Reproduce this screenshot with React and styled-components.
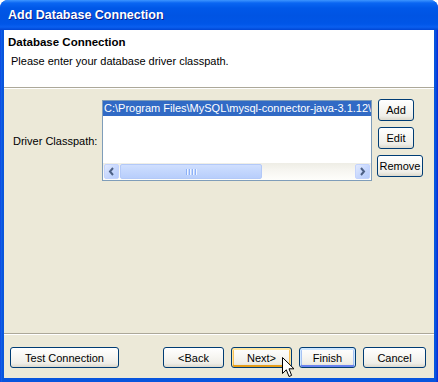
import React from "react";
import styled, { createGlobalStyle, css } from "styled-components";

const Global = createGlobalStyle`
  html, body { margin: 0; padding: 0; background: #ffffff; }
  body { font-family: "Liberation Sans", Arial, sans-serif; }
  * { box-sizing: border-box; }
`;

const Window = styled.div`
  position: relative;
  width: 438px;
  height: 382px;
  display: flex;
  flex-direction: column;
  border-radius: 8px 8px 0 0;
  overflow: hidden;
  background: linear-gradient(90deg, #0831d9 0px, #166aee 1px, #0855dd 2px, #0855dd 436px, #0831d9 437px);
  font-family: "Liberation Sans", Arial, sans-serif;
  font-size: 11px;
  color: #000;
`;

const TitleBar = styled.div`
  height: 30px;
  flex: none;
  display: flex;
  align-items: center;
  padding: 0 0 1px 8px;
  background: linear-gradient(
    180deg,
    #3d95ff 0px,
    #0a66f2 3px,
    #0058e8 8px,
    #0054e3 16px,
    #0056e8 24px,
    #0a5ff0 27px,
    #0046d4 30px
  );
  color: #fff;
  font-weight: bold;
  font-size: 12.5px;
  text-shadow: 1px 1px 0 #0a1e8a;
`;

const Frame = styled.div`
  flex: 1;
  display: flex;
  flex-direction: column;
  margin: 0 4px 4px 4px;
  background: #ece9d8;
  min-height: 0;
`;

const Header = styled.div`
  flex: none;
  height: 58px;
  background: #fff;
  padding: 6px 4px 0 4px;
  border-bottom: 1px solid #aca899;
  box-shadow: 0 1px 0 #ffffff;
  margin-bottom: 1px;
`;

const HeaderTitle = styled.div`
  font-weight: bold;
  font-size: 11.5px;
  line-height: 13px;
`;

const HeaderText = styled.div`
  margin: 6px 0 0 3px;
  line-height: 13px;
`;

const Body = styled.div`
  flex: 1;
  display: flex;
  align-items: flex-start;
  padding: 11px 0 0 9px;
`;

const Field = styled.div`
  display: flex;
  align-items: center;
`;

const Label = styled.div`
  width: 89px;
`;

const ListBox = styled.div`
  width: 270px;
  height: 81px;
  border: 1px solid #7f9db9;
  background: #fff;
  display: flex;
  flex-direction: column;
`;

const ListViewport = styled.div`
  flex: 1;
  overflow: hidden;
`;

const ListRow = styled.div`
  height: 15px;
  line-height: 14px;
  white-space: nowrap;
  overflow: hidden;
  padding-left: 1px;
  background: ${(p) => (p.$selected ? "#316ac5" : "transparent")};
  color: ${(p) => (p.$selected ? "#fff" : "#000")};
  width: 100%;
`;

const HScroll = styled.div`
  height: 17px;
  flex: none;
  display: flex;
  align-items: center;
  gap: 1px;
  padding: 0 1px;
  background: linear-gradient(180deg, #eeede5 0%, #f6f5f0 40%, #fefefb 100%);
`;

const ArrowBtn = styled.div`
  width: 15px;
  height: 15px;
  flex: none;
  border: 1px solid #c3d3fd;
  border-radius: 2px;
  background: linear-gradient(135deg, #e2eafe 0%, #c8d8fd 50%, #b6ccfb 100%);
  display: flex;
  align-items: center;
  justify-content: center;
`;

const Thumb = styled.div`
  width: 142px;
  height: 15px;
  flex: none;
  border: 1px solid #b3c9f8;
  border-radius: 2px;
  background: linear-gradient(180deg, #d0dffe 0%, #c4d7fd 45%, #b8cefb 100%);
  display: flex;
  align-items: center;
  justify-content: center;
  gap: 1px;
`;

const Grip = styled.span`
  width: 1px;
  height: 6px;
  background: #8cb0f8;
  box-shadow: 1px 0 0 #eef4fe;
  margin-right: 1px;
`;

const Track = styled.div`
  flex: 1;
`;

const SideButtons = styled.div`
  display: flex;
  flex-direction: column;
  align-items: flex-start;
  gap: 6px;
  margin: -1px 0 0 5px;
`;

const SideButton = styled.div`
  padding-left: ${(p) => (p.$indent ? 1 : 0)}px;
`;

const hot = css`
  box-shadow: inset 0 1px 0 1px #ffe7a2, inset 0 -1px 0 1px #e59d1b, inset 0 0 0 2px #f9c15a;
`;
const def = css`
  box-shadow: inset 0 1px 0 1px #cee7ff, inset 0 -1px 0 1px #6982ee, inset 0 0 0 2px #a6c2f3;
`;

const Button = styled.button`
  height: ${(p) => p.$h || 21}px;
  width: ${(p) => p.$w}px;
  padding: 0;
  font-family: "Liberation Sans", Arial, sans-serif;
  font-size: 11px;
  color: #000;
  border: 1px solid #003c74;
  border-radius: 3px;
  background: linear-gradient(180deg, #ffffff 0%, #f7f6f2 45%, #efeee8 80%, #dcd8cc 100%);
  display: flex;
  align-items: center;
  justify-content: center;
  ${(p) => (p.$variant === "hot" ? hot : p.$variant === "default" ? def : "")}
`;

const Footer = styled.div`
  flex: none;
  display: flex;
  align-items: center;
  gap: 7px;
  padding: 13px 8px 10px 6px;
  border-top: 1px solid #aca899;
  box-shadow: inset 0 1px 0 #ffffff;
`;

const Spacer = styled.div`
  flex: 1;
`;

const Cursor = styled.svg`
  position: absolute;
  left: 282px;
  top: 357px;
`;

const Chevron = ({ dir }) => (
  <svg width="7" height="9" viewBox="0 0 7 9">
    <polyline
      points={dir === "left" ? "5,1 2,4.5 5,8" : "2,1 5,4.5 2,8"}
      fill="none"
      stroke="#4d6185"
      strokeWidth="2"
    />
  </svg>
);

export default function App() {
  return (
    <>
      <Global />
      <Window>
        <TitleBar>Add Database Connection</TitleBar>
        <Frame>
          <Header>
            <HeaderTitle>Database Connection</HeaderTitle>
            <HeaderText>Please enter your database driver classpath.</HeaderText>
          </Header>
          <Body>
            <Field>
              <Label>Driver Classpath:</Label>
              <ListBox>
                <ListViewport>
                  <ListRow $selected>
                    C:\Program Files\MySQL\mysql-connector-java-3.1.12\mysql-connector-java-3.1.12-bin.jar
                  </ListRow>
                </ListViewport>
                <HScroll>
                  <ArrowBtn>
                    <Chevron dir="left" />
                  </ArrowBtn>
                  <Thumb>
                    <Grip />
                    <Grip />
                    <Grip />
                    <Grip />
                  </Thumb>
                  <Track />
                  <ArrowBtn>
                    <Chevron dir="right" />
                  </ArrowBtn>
                </HScroll>
              </ListBox>
            </Field>
            <SideButtons>
              <SideButton $indent>
                <Button $w={36} $h={22}>Add</Button>
              </SideButton>
              <SideButton $indent>
                <Button $w={36} $h={22}>Edit</Button>
              </SideButton>
              <SideButton>
                <Button $w={46} $h={22}>Remove</Button>
              </SideButton>
            </SideButtons>
          </Body>
          <Footer>
            <Button $w={109}>Test Connection</Button>
            <Spacer />
            <Button $w={61}>&lt;Back</Button>
            <Button $w={61} $variant="hot">Next&gt;</Button>
            <Button $w={57} $variant="default">Finish</Button>
            <Button $w={63}>Cancel</Button>
          </Footer>
        </Frame>
        <Cursor width="14" height="22" viewBox="0 0 14 22">
          <path
            d="M0.5 0.5 L0.5 16.5 L4.3 12.8 L7 19.5 L9.6 18.4 L7 11.8 L12 11.8 Z"
            fill="#fff"
            stroke="#000"
            strokeWidth="1"
          />
        </Cursor>
      </Window>
    </>
  );
}
